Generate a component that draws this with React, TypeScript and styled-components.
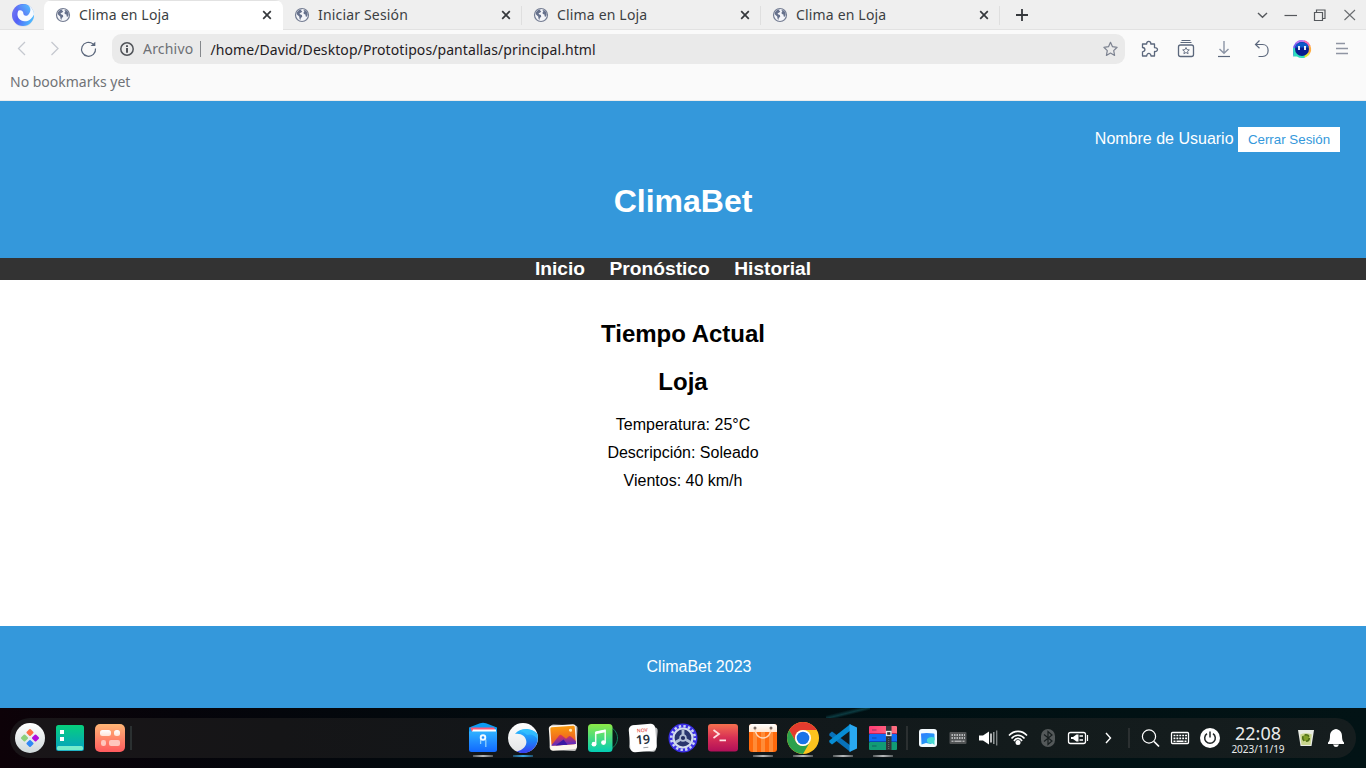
import React from "react";
import styled, { createGlobalStyle } from "styled-components";

const GlobalStyle = createGlobalStyle`
  * { box-sizing: border-box; }
  body { margin: 0; overflow: hidden; background: #fff; }
`;

const Screen = styled.div`
  width: 1366px;
  height: 768px;
  display: flex;
  flex-direction: column;
  overflow: hidden;
  svg { display: block; flex: none; }
`;

/* ---------- browser chrome ---------- */

const Browser = styled.div`
  height: 101px;
  flex: none;
  background: #fafafa;
  border-bottom: 1px solid #ebebeb;
  font-family: "Noto Sans", sans-serif;
  font-size: 14px;
  color: #3c3f43;
`;

const TabStrip = styled.div`
  height: 30px;
  display: flex;
  background: #efefef;
  box-shadow: inset 0 -1px #e2e2e2;
`;

const LogoCell = styled.div`
  width: 44px;
  padding: 3px 0 0 11px;
`;

const Tab = styled.div<{ $active?: boolean; $divider?: boolean }>`
  width: 239px;
  height: 30px;
  display: flex;
  align-items: center;
  padding: 0 11px;
  position: relative;
  background: ${(p) => (p.$active ? "linear-gradient(#e2e2e2 0 1px, #fff 1px)" : "transparent")};
  border-radius: ${(p) => (p.$active ? "8px 8px 0 0" : "0")};
  ${(p) => p.$divider && `&::after { content: ""; position: absolute; right: 0; top: 6px; width: 1px; height: 19px; background: #dfdfdf; }`}
`;

const TabTitle = styled.span`
  flex: 1;
  margin-left: 8px;
  line-height: 20px;
  letter-spacing: 0.17px;
  white-space: nowrap;
`;

const NewTab = styled.div`
  width: 44px;
  padding: 8px 0 0 15px;
`;

const WindowButtons = styled.div`
  margin-left: auto;
  display: flex;
  align-items: center;
`;

const Toolbar = styled.div`
  height: 38px;
  display: flex;
  align-items: center;
`;

const NavButtons = styled.div`
  width: 112px;
  flex: none;
  display: flex;
  padding-left: 12px;
  gap: 13px;
`;

const AddressBar = styled.div`
  width: 1013px;
  flex: none;
  height: 30px;
  display: flex;
  align-items: center;
  border-radius: 9px;
  background: #eaeaea;
  padding: 0 7px 0 8px;
  white-space: nowrap;
`;

const Scheme = styled.span`
  margin-left: 9px;
  padding-right: 7px;
  color: #6d7075;
  border-right: 1px solid #85888c;
  line-height: 16px;
  letter-spacing: 0.2px;
`;

const Path = styled.span`
  flex: 1;
  margin: 1px 0 0 9px;
  color: #1f2023;
  letter-spacing: 0.085px;
`;

const ToolButtons = styled.div`
  display: flex;
  flex: none;
  padding-left: 14px;
`;

const Bookmarks = styled.div`
  padding: 4px 0 0 10px;
  line-height: 20px;
  color: #707276;
`;

/* ---------- web page ---------- */

const Page = styled.div`
  height: 607px;
  flex: none;
  display: flex;
  flex-direction: column;
  font-family: "Liberation Sans", Arial, sans-serif;
  font-size: 16px;
  color: #000;
  text-align: center;
`;

const Header = styled.header`
  height: 157px;
  padding: 26px 26px 0;
  background: #3498db;
  color: #fff;
`;

const UserBox = styled.div`
  display: flex;
  justify-content: flex-end;
  gap: 4.45px;
  line-height: 24px;
`;

const LogoutButton = styled.button`
  width: 102px;
  height: 25px;
  padding: 0;
  border: 0;
  background: #fff;
  color: #3498db;
  font: 13.3333px "Liberation Sans", Arial, sans-serif;
`;

const Title = styled.h1`
  margin: 31px 0 0;
  font-size: 32px;
  line-height: 37px;
`;

const Nav = styled.nav`
  height: 22px;
  background: #333;
  line-height: 22px;
`;

const NavLink = styled.a`
  margin-right: 20px;
  color: #fff;
  font-size: 19.2px;
  font-weight: bold;
`;

const Main = styled.main`
  flex: 1;
  padding-top: 40px;
`;

const Heading = styled.h2`
  margin: 0 0 20px;
  font-size: 24px;
  line-height: 28px;
`;

const Line = styled.p`
  margin: 0 0 10px;
  line-height: 18px;
`;

const Footer = styled.footer`
  height: 82px;
  padding: 32px 0 0 32px;
  background: #3498db;
  color: #fff;
  line-height: 18px;
`;

/* ---------- desktop dock ---------- */

const Desktop = styled.div`
  height: 60px;
  padding: 10px;
  background:
    linear-gradient(166deg, transparent 35%, #0b3a40 50%, transparent 62%) 826px 0 / 44px 10px no-repeat,
    linear-gradient(90deg, #0d0208 0, #05040a 180px, #020a0e 480px, #001013 900px, #021315 100%);
`;

const Dock = styled.div`
  width: 1346px;
  height: 40px;
  display: flex;
  align-items: center;
  border-radius: 20px;
  background: linear-gradient(90deg, #191518, #151517 20%, #11171a 50%, #131b1c 75%, #151d1e);
  color: #fff;
  font-family: "Noto Sans", sans-serif;
`;

const Group = styled.div`
  display: flex;
`;

const AppSlot = styled.div<{ $mark?: string }>`
  width: 40px;
  height: 40px;
  position: relative;
  ${(p) =>
    p.$mark &&
    `&::after { content: ""; position: absolute; left: 10px; bottom: 1px; width: 20px; height: 2px;
     background: linear-gradient(90deg, ${p.$mark}66, ${p.$mark}, ${p.$mark}66); }`}
`;

const Divider = styled.div<{ $h: number; $before: number; $after: number }>`
  width: 2px;
  height: ${(p) => p.$h}px;
  margin: 0 ${(p) => p.$after}px 0 ${(p) => p.$before}px;
  background: #2b3031;
`;

const Clock = styled.div`
  width: 66px;
  height: 40px;
  padding-top: 4px;
  text-align: center;
  white-space: nowrap;
`;

const Time = styled.div`
  font-size: 18px;
  line-height: 22px;
  color: #e8eaea;
`;

const DateText = styled.div`
  font-size: 10px;
  line-height: 10px;
  color: #e8eaea;
`;

/* ---------- chrome icons ---------- */

const Globe = () => (
  <svg width="16" height="16" viewBox="0 0 16 16">
    <circle cx="8" cy="8" r="6.5" fill="#f4f5f9" stroke="#737c92" strokeWidth="1.200" />
    <path d="M3 5.200 5 3l2.600-.8-.6 1.300 1.300.7L7.300 5.500 5.600 6.200l.4 1 1.900.9.3 1.700-1.400 1.300-.4 2-.8-1.200-.4-2.500-1.700-1.500L2.600 7Z" fill="#66718c" />
    <path d="m9.800 3 2 .6 1.600 1.900.2 2.500-.9 1.800-1-.4-.3-1.800-1.500-.5-.5-1.400 1-1.300-.8-.6Z" fill="#66718c" />
  </svg>
);

const CloseX = () => (
  <svg width="10" height="10" viewBox="0 0 10 10" stroke="#35383c" strokeWidth="1.7">
    <path d="m1.200 1.200 7.600 7.600M8.800 1.200 1.200 8.800" />
  </svg>
);

const BrowserLogo = () => (
  <svg width="24" height="24" viewBox="0 0 24 24">
    <defs>
      <linearGradient id="bl" x1="0" y1="0" x2="1" y2=".4">
        <stop stopColor="#7a7df0" />
        <stop offset=".45" stopColor="#5560f6" />
        <stop offset="1" stopColor="#4cb4ff" />
      </linearGradient>
      <linearGradient id="bl2" x1="0" y1=".6" x2="1" y2="0">
        <stop stopColor="#5d62f4" />
        <stop offset="1" stopColor="#52c4ff" />
      </linearGradient>
    </defs>
    <circle cx="12" cy="12.600" r="11" fill="#d9dde4" />
    <circle cx="12" cy="12" r="11" fill="url(#bl)" />
    <path d="M17.500 2.600A11 11 0 0 1 23 11.500C20.500 16.500 17 18.500 13.500 18.300 9 18 6 14.500 6.500 10.500 6.800 8 8 6.200 10 5.200Z" fill="#f7faff" />
    <path d="M4 5.500C8 1 14 0 18 3.200c2.300 2.200 1.800 6.300-1.200 9C14.500 13.500 12.300 12.300 12.300 10.300 12.300 8 10 6.500 7.800 7.500Z" fill="url(#bl2)" />
  </svg>
);

const Tool = ({ w, children }: { w: number; children: React.ReactNode }) => (
  <svg width={w} height="24" viewBox={`${-w / 2} -12 ${w} 24`} fill="none" stroke="#5b677c" strokeWidth="1.2">
    {children}
  </svg>
);

/* ---------- dock icons ---------- */

const App40 = ({ children }: { children: React.ReactNode }) => (
  <svg width="40" height="40" viewBox="0 0 40 40">{children}</svg>
);

const Grad = ({ id, a, b, c, x = 0, y = 1 }: { id: string; a: string; b: string; c?: string; x?: number; y?: number }) => (
  <linearGradient id={id} x1="0" y1="0" x2={x} y2={y}>
    <stop stopColor={a} />
    {c && <stop offset=".5" stopColor={c} />}
    <stop offset="1" stopColor={b} />
  </linearGradient>
);

const Launcher = () => (
  <App40>
    <Grad id="la" a="#ffffff" b="#cfd8da" />
    <circle cx="20" cy="20" r="15" fill="url(#la)" />
    <rect x="-2.800" y="-2.800" width="5.600" height="5.600" rx="1" transform="translate(20 14.500) rotate(45)" fill="#ff6e45" />
    <rect x="-2.800" y="-2.800" width="5.600" height="5.600" rx="1" transform="translate(14.500 20) rotate(45)" fill="#8ccf7b" />
    <rect x="-2.800" y="-2.800" width="5.600" height="5.600" rx="1" transform="translate(25.500 20) rotate(45)" fill="#b10ddb" />
    <rect x="-2.800" y="-2.800" width="5.600" height="5.600" rx="1" transform="translate(20 25.500) rotate(45)" fill="#2f87f5" />
  </App40>
);

const MultiTask = () => (
  <App40>
    <Grad id="mt" a="#06d07c" b="#069fc4" />
    <rect x="6" y="7" width="28" height="26" rx="2.500" fill="url(#mt)" />
    <path d="M10 12h4v4h-4zM10 19h4v4h-4z" fill="#fff" />
    <rect x="7" y="28" width="26" height="4.200" rx="1.500" fill="#76eccb" />
  </App40>
);

const Widgets = () => (
  <App40>
    <Grad id="wi" a="#ffb575" b="#ff5a5e" />
    <Grad id="wi2" a="#fff" b="#ffe3d6" />
    <rect x="5" y="6" width="30" height="28" rx="5" fill="url(#wi)" />
    <rect x="10" y="12" width="11" height="6" rx="2.500" fill="url(#wi2)" />
    <rect x="24" y="12" width="6" height="6" rx="2.500" fill="url(#wi2)" />
    <rect x="11" y="22" width="5" height="6" rx="2.200" fill="#ffc6bd" />
    <rect x="19" y="22" width="11" height="6" rx="2" fill="#ffc6bd" />
  </App40>
);

const Files = () => (
  <App40>
    <Grad id="fi" a="#2fb1ff" b="#1168ff" />
    <path d="M6 13V9.500L17 5.300q3-1 6 0L34 9.500V15H6Z" fill="#0b9cf4" />
    <path d="M7.500 9.500H31l1.500 3v2H9Z" fill="#ff5777" />
    <path d="M10 11.500h23V15H8.500Z" fill="#fff" />
    <path d="M6 13.500h28v18q0 2.500-2.500 2.500h-23Q6 34 6 31.500Z" fill="url(#fi)" />
    <path d="M17.600 21.500V26M22.800 21.500V29" stroke="#8fd0ff" strokeWidth="1.300" />
    <circle cx="20" cy="19.500" r="2.300" fill="#1f8dff" stroke="#f3fbff" strokeWidth="1.900" />
  </App40>
);

const WaveBrowser = () => (
  <App40>
    <Grad id="wb" a="#2bc0ff" b="#3a3ef2" c="#1c84f6" />
    <Grad id="wb2" a="#ffffff" b="#e2e4e6" />
    <circle cx="20" cy="20" r="15" fill="url(#wb2)" />
    <path d="M12 16C15 12 20.500 10.300 26 11.200c3.800.6 6.500 2.300 8.200 4.500C37 26 29.500 35 20 35c-2.500 0-4.500-.6-6.300-1.500C20 32 24 28 23.300 23 22.600 18 18 15 12 16Z" fill="url(#wb)" />
    <path d="M17 13c6-3 14.500-1 17.300 3.500.5 1.600.7 3.500.6 5C31.500 17 28 15.500 24 17c-2-2-4-3.300-7-4Z" fill="#38c8ff" opacity=".6" />
  </App40>
);

const Photos = () => (
  <App40>
    <Grad id="ph" a="#fb9a0c" b="#e9502a" />
    <Grad id="ph2" a="#e8354a" b="#5a2bc4" />
    <rect x="7" y="7" width="27" height="25.500" rx="3" fill="#b5b5b5" transform="rotate(3 20 20)" />
    <rect x="6.500" y="7" width="27" height="25" rx="3" fill="#fdf6ee" transform="rotate(-4 20 20)" />
    <g transform="rotate(-4 20 20)">
      <rect x="8" y="8.500" width="24.500" height="18.500" rx="1.500" fill="url(#ph)" />
      <path d="m8 26.500 8.500-9.500q1-1 2 0l4.500 4 3-2.300q1-.7 2 .3l4.500 5V27H8Z" fill="url(#ph2)" />
      <path d="m12 27 8.500-5.500L24 27Z" fill="#3a18a4" />
      <circle cx="28" cy="12.800" r="1.600" fill="#ffe5ad" />
    </g>
  </App40>
);

const Music = () => (
  <App40>
    <Grad id="mu" a="#8cea47" b="#03cdb4" />
    <path d="M28 9c4 3 6.500 6.500 6.500 11S32 28.500 28 31" fill="#081c1a" stroke="#15976a" strokeWidth=".8" />
    <rect x="5" y="6" width="24.500" height="28" rx="3.500" fill="url(#mu)" />
    <path d="M12.700 26V14.500l9.500-2V24.500" fill="none" stroke="#f1fff3" strokeWidth="1.500" />
    <path d="M12.500 13.500l9.700-2v2.800l-9.700 2Z" fill="#fff" />
    <circle cx="11" cy="26.200" r="2.400" fill="#fff" />
    <circle cx="20.500" cy="24.600" r="2.400" fill="#fff" />
  </App40>
);

const Calendar = () => (
  <App40>
    <rect x="7" y="8" width="27" height="25" rx="4" fill="#bbbdbf" transform="rotate(5 20 20)" />
    <g transform="rotate(-5 20 20)" fontFamily="Noto Sans, sans-serif" textAnchor="middle">
      <rect x="6.500" y="6.500" width="26.500" height="27" rx="4.500" fill="#fff" />
      <text x="20" y="14" fontSize="5" fontWeight="500" fill="#e6463d">NOV</text>
      <text x="19.800" y="26" fontSize="12.500" fontWeight="600" fill="#25303e">19</text>
      <path d="M19.500 29.800h5" stroke="#9a9fa5" />
    </g>
  </App40>
);

const Settings = () => (
  <App40>
    <circle cx="20" cy="20" r="14.500" fill="#3b2fe4" />
    <circle cx="20" cy="20" r="11.800" fill="none" stroke="#c9d5f3" strokeWidth="2.600" strokeDasharray="2.400 2.234" />
    <circle cx="20" cy="20" r="9.500" fill="#29366e" stroke="#d3dcec" strokeWidth="2.200" />
    <path d="M20 20v-8.500M20 20l-7.400 4.300M20 20l7.400 4.300" stroke="#b3bfd6" strokeWidth="2.800" />
    <circle cx="20" cy="20" r="2.900" fill="#222d61" stroke="#b3bfd6" strokeWidth="1.600" />
  </App40>
);

const Terminal = () => (
  <App40>
    <Grad id="te" a="#f5704e" b="#b10f59" c="#d83055" />
    <rect x="5" y="6" width="30" height="27.500" rx="3" fill="url(#te)" />
    <path d="m10.500 12 5.500 4-5.500 4M16.500 22.300H23" fill="none" stroke="#ffe2e2" strokeWidth="1.700" />
  </App40>
);

const Store = () => (
  <App40>
    <Grad id="st" a="#ffffff" b="#ffe6d2" />
    <rect x="6" y="6" width="28" height="28" rx="3" fill="#ff6a0c" />
    <path d="M10 14h4v20h-4zM18 14h4v20h-4zM26 14h4v20h-4z" fill="#ff8c38" />
    <path d="M6 14V9q0-3 3-3h22q3 0 3 3v5Z" fill="url(#st)" />
    <path d="M12 10.500c0 5 3 9.500 8 9.500s8-4.500 8-9.500" fill="none" stroke="#ffd7b8" strokeWidth="1.500" />
    <circle cx="12" cy="10" r="1.500" fill="#796b63" />
    <circle cx="28" cy="10" r="1.500" fill="#796b63" />
  </App40>
);

const Chrome = () => (
  <App40>
    <circle cx="20" cy="20" r="16" fill="#fcc31e" />
    <path d="M6.144 12A16 16 0 0 1 33.856 12H20a8 8 0 0 0-6.928 12Z" fill="#e33b2e" />
    <path d="M6.144 12A16 16 0 0 0 20 36l6.928-12A8 8 0 0 1 13.072 24Z" fill="#2ca14c" />
    <circle cx="20" cy="20" r="8" fill="#fff" />
    <circle cx="20" cy="20" r="6.300" fill="#1a73e8" />
  </App40>
);

const Code = () => (
  <App40>
    <path d="M6.300 15.800 9 13.500 27.500 27.500V34L6.300 17.500Z" fill="#0872ba" />
    <path d="M6.300 24.200 9 26.500 27.500 12.500V6L6.300 22.500Z" fill="#078dd4" />
    <path d="M26.500 6 34 9.500v21L26.500 34Z" fill="#29a9f2" />
  </App40>
);

const Archive = () => (
  <App40>
    <Grad id="ar" a="#ff3c76" b="#ff7180" x={1} y={0} />
    <rect x="6" y="8" width="28" height="8" rx="1" fill="url(#ar)" />
    <rect x="6" y="16" width="28" height="8" rx="1" fill="#0e6bf4" />
    <rect x="6" y="24" width="28" height="8" rx="1" fill="#129b76" />
    <path d="M6.500 15.500h27" stroke="#bd2758" />
    <path d="M6.500 23.500h27" stroke="#0b48b6" />
    <path d="M9 12h4.500M9 20h4.500M9 28h4.500" stroke="#18224a" strokeOpacity=".3" strokeWidth="1.400" />
    <rect x="23" y="8" width="5.500" height="24" fill="#323538" />
    <path d="M25.700 20v12" stroke="#6b6e70" strokeDasharray="1 1" />
    <rect x="23.500" y="13.500" width="4.500" height="4" fill="#353535" stroke="#e5e5e5" strokeWidth="1.300" />
  </App40>
);

const Tray = ({ children }: { children: React.ReactNode }) => (
  <svg width="30" height="40" viewBox="-15 -20 30 40" fill="none" stroke="#fff">{children}</svg>
);

const apps: [React.FC, string?][] = [
  [Files, "#b9bcbd"], [WaveBrowser, "#35a7e5"], [Photos], [Music], [Calendar], [Settings],
  [Terminal], [Store, "#b9bcbd"], [Chrome, "#b9bcbd"], [Code, "#b9bcbd"], [Archive, "#b9bcbd"],
];

const tabs = ["Clima en Loja", "Iniciar Sesión", "Clima en Loja", "Clima en Loja"];

export default function App() {
  return (
    <Screen>
      <GlobalStyle />
      <Browser>
        <TabStrip>
          <LogoCell><BrowserLogo /></LogoCell>
          {tabs.map((t, i) => (
            <Tab key={i} $active={i === 0} $divider={i > 0}>
              <Globe />
              <TabTitle>{t}</TabTitle>
              <CloseX />
            </Tab>
          ))}
          <NewTab>
            <svg width="14" height="14" viewBox="0 0 14 14" stroke="#35383c" strokeWidth="1.800"><path d="M7 1v12M1 7h12" /></svg>
          </NewTab>
          <WindowButtons>
            <Tool w={26}><path d="m-5-2 4.500 4.200L4-2" stroke="#55585c" strokeWidth="1.400" /></Tool>
            <Tool w={30}><path d="M-6.500 .5H6" stroke="#55585c" /></Tool>
            <Tool w={28}><path d="M-5.500-2.500h8v8h-8ZM-3.500-2.500v-2.500h8.500v8.500H2.500" stroke="#55585c" /></Tool>
            <Tool w={32}><path d="m-5.500-5 10.500 10M5-5l-10.500 10" stroke="#6a6d70" strokeWidth="1.100" /></Tool>
          </WindowButtons>
        </TabStrip>
        <Toolbar>
          <NavButtons>
            <Tool w={20}><path d="m3-7-6.500 6.500L3 6" stroke="#c5c8cf" strokeWidth="1.300" /></Tool>
            <Tool w={20}><path d="m-3.500-7L3-.500-3.500 6" stroke="#c5c8cf" strokeWidth="1.300" /></Tool>
            <Tool w={20}><path d="M5-5.100A7 7 0 1 0 7.500-.500" strokeWidth="1.200" /><path d="M2.500-3h4.800v-4.300Z" fill="#5b677c" stroke="none" /></Tool>
          </NavButtons>
          <AddressBar>
            <svg width="14" height="14" viewBox="0 0 14 14">
              <circle cx="7" cy="7" r="6.200" fill="none" stroke="#515459" strokeWidth="1.500" />
              <path d="M6 3.200h2v1.800H6zM6 6h2v4.700H6z" fill="#515459" />
            </svg>
            <Scheme>Archivo</Scheme>
            <Path>/home/David/Desktop/Prototipos/pantallas/principal.html</Path>
            <svg width="16" height="16" viewBox="0 0 16 16" fill="none" stroke="#7c8290" strokeWidth="1.200" strokeLinejoin="round">
              <path d="m8.500 1.300 2 4.400 4.600.6-3.400 3.300.9 4.800-4.100-2.300-4.100 2.300.9-4.800L1.900 6.300l4.600-.6Z" />
            </svg>
          </AddressBar>
          <ToolButtons>
            <Tool w={21}>
              <path d="M-7-5H-2.800C-3.200-8.500 1.700-8.500 1.300-5H5v3.700C9-1.800 9 3 5 2.500V7H1.500C1.500 3.600-2.800 3.600-2.800 7H-7V2.800C-3.800 2.500-3.800-1.300-7-1.500Z" strokeLinejoin="round" strokeWidth="1.300" />
            </Tool>
            <Tool w={52}>
              <rect x="-7.500" y="-4" width="15" height="11.500" rx="2" strokeWidth="1.300" />
              <path d="M-5.500-6.500h11M-4.500-8.500h9" />
              <path d="m0-1.500 1 2.200 2.300.2-1.700 1.500.5 2.300L0 3.500l-2.100 1.200.5-2.300L-3.300.9-1 .7Z" strokeWidth=".9" />
            </Tool>
            <Tool w={24}><path d="M0-8v12M-4.500 0 0 4.200 4.500 0" stroke="#8b94a5" strokeWidth="1.400" /><path d="M-6 7.500H6" /></Tool>
            <Tool w={52}><path d="M-2.500-8.500-6.500-4.500-2.500-.800M-6.500-4.500H.5C8-4.500 8 7.500.5 7.500H-3.500" strokeWidth="1.200" /></Tool>
            <svg width="28" height="24" viewBox="-14 -12 28 24">
              <path d="M-9 8V0A9 9 0 0 1 0-9Z" fill="#765fef" />
              <path d="M-6.400-6.400A9 9 0 0 1 5-7.500L0 0Z" fill="#bb74ed" />
              <path d="M2-8.800A9 9 0 0 1 8.500-3L0 0Z" fill="#f66bb2" />
              <path d="M8.200-3.700A9 9 0 0 1 6.400 6.400L0 0Z" fill="#ffad42" />
              <path d="M7.500 5A9 9 0 0 1 0 9V0Z" fill="#e3e734" />
              <path d="M3 8.500A9 9 0 0 1-5 7.600H-8.500L-8.900-1 0 0Z" fill="#2cdfbe" />
              <circle r="7" fill="#071c8e" /><path d="M-6.800-1.500A7 7 0 0 1 6.800-1.500Z" fill="#0c58c9" />
              <path d="M-3-3v4M3-3v4" stroke="#fff" strokeWidth="1.800" />
            </svg>
            <Tool w={52}><path d="M-6-5.500H3M-6-.500H6M-6 4.500H6" stroke="#8f95a3" strokeWidth="1.400" /></Tool>
          </ToolButtons>
        </Toolbar>
        <Bookmarks>No bookmarks yet</Bookmarks>
      </Browser>

      <Page>
        <Header>
          <UserBox>
            <span>Nombre de Usuario</span>
            <LogoutButton>Cerrar Sesión</LogoutButton>
          </UserBox>
          <Title>ClimaBet</Title>
        </Header>
        <Nav>
          <NavLink>Inicio</NavLink> <NavLink>Pronóstico</NavLink> <NavLink>Historial</NavLink>
        </Nav>
        <Main>
          <Heading>Tiempo Actual</Heading>
          <Heading>Loja</Heading>
          <Line>Temperatura: 25°C</Line>
          <Line>Descripción: Soleado</Line>
          <Line>Vientos: 40 km/h</Line>
        </Main>
        <Footer>ClimaBet 2023</Footer>
      </Page>

      <Desktop>
        <Dock>
          <Group>
            <AppSlot><Launcher /></AppSlot>
            <AppSlot><MultiTask /></AppSlot>
            <AppSlot><Widgets /></AppSlot>
          </Group>
          <Divider $h={24} $before={0} $after={331} />
          <Group>
            {apps.map(([Icon, mark], i) => (
              <AppSlot key={i} $mark={mark}><Icon /></AppSlot>
            ))}
          </Group>
          <Divider $h={24} $before={3} $after={5} />
          <Group>
            <Tray>
              <Grad id="tr" a="#2f7dff" b="#1fa8f0" x={1} />
              <rect x="-9" y="-9" width="18" height="18" rx="3" fill="#f4fbff" stroke="none" />
              <path d="M-7-4.500q5-.8 12.500 0 1 0 1 1V2L3 6-2 5-6.500 6.500Z" fill="url(#tr)" stroke="none" />
              <path d="M-1 1q3-3 7.500-1.500V7L4.500 5.500H1L-1 3.500Z" fill="#48d9d0" stroke="none" />
            </Tray>
            <Tray>
              <rect x="-8.500" y="-6" width="17" height="12" rx="1" fill="#505354" stroke="none" />
              <path d="M-6.500-3H7M-6.500 0H7" stroke="#d8d9da" strokeWidth="1.300" strokeDasharray="1.500 1" />
              <path d="M-6.500 3.200H7" stroke="#d8d9da" strokeDasharray="2 1 7 1" />
            </Tray>
            <Tray>
              <path d="M-9-2.500h4L1-6.500v13L-5 2.500h-4Z" fill="#fff" stroke="none" />
              <path d="M3-4.500v9" strokeWidth="1.400" /><path d="M5.800-6v12" stroke="#a7abac" strokeWidth="1.300" /><path d="M8.700-7.500v15" stroke="#85898a" strokeWidth="1.300" />
            </Tray>
            <Tray>
              <path d="M-9-2.500C-4-8 4-8 9-2.500M-6.500.5C-3-3.800 3-3.800 6.500.5M-4 3C-2-.5 2-.5 4 3" strokeWidth="1.600" />
              <circle cy="4.500" r="2.500" fill="#fff" stroke="none" />
            </Tray>
            <Tray>
              <rect x="-7" y="-9" width="14" height="18" rx="7" fill="#54595a" stroke="none" />
              <path d="M-4-3.500 4 3 0 6.500v-13L4-3-4 3.500" stroke="#171e1f" strokeWidth="1.200" />
            </Tray>
            <Tray>
              <rect x="-9.500" y="-5.500" width="17" height="11" rx="2" strokeWidth="1.300" />
              <path d="M9.500-3v6" strokeWidth="1.200" />
              <path d="M-7-.900h2L-1.500-3.500h2v7h-2L-5 .9h-2Z" fill="#fff" stroke="none" />
              <path d="M1.500-2h3.500M1.500 2h3.500" strokeWidth="1.400" />
            </Tray>
            <Tray><path d="m-2-5 4.500 5L-2 5" strokeWidth="1.400" /></Tray>
          </Group>
          <Divider $h={20} $before={5} $after={5} />
          <Group>
            <Tray><circle cx="-1" cy="-1.500" r="6.600" strokeWidth="1.200" /><path d="m4 3.500 5 5" strokeWidth="1.700" /></Tray>
            <Tray>
              <rect x="-8.500" y="-5.500" width="17" height="11" rx="1" strokeWidth="1.300" />
              <path d="M-6.500-2.500H7M-6.500 .300H7" strokeWidth="1.700" strokeDasharray="1.900 1" />
              <path d="M-6.500 3.200H7" strokeWidth="1.600" strokeDasharray="2 1 7 1" />
            </Tray>
            <Tray>
              <circle r="10" fill="#fff" stroke="none" />
              <path d="M-3-4.300a5.300 5.300 0 1 0 6 0M0-6.500v6" stroke="#222829" strokeWidth="1.500" />
            </Tray>
          </Group>
          <Clock>
            <Time>22:08</Time>
            <DateText>2023/11/19</DateText>
          </Clock>
          <Group>
            <Tray>
              <path d="M-8-8H8L5.500 8h-11Z" fill="#e8ebe4" stroke="none" />
              <path d="M-5.800-3.500Q0-6 5.800-3.500L4.500 7h-9Z" fill="#c9d68e" stroke="none" />
              <circle r="3.300" fill="#7f9e28" stroke="#4f6e18" strokeWidth="1.600" strokeDasharray="5 1.900" />
            </Tray>
            <Tray>
              <path d="M-8 6V4.500Q-6 3-6-2C-6-6.500-3-8.500 0-9c3 .5 6 2.500 6 7q0 5 2 6.500V6Z" fill="#fff" stroke="none" />
              <path d="M-3 6.500H3Q2 9 0 9T-3 6.500Z" fill="#fff" stroke="none" />
            </Tray>
          </Group>
        </Dock>
      </Desktop>
    </Screen>
  );
}
